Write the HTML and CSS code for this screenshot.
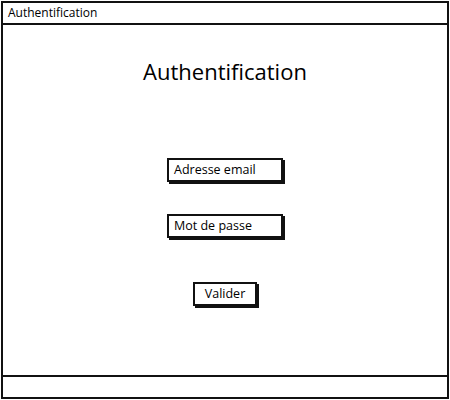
FILE: index.html
```html
<!DOCTYPE html>
<html lang="fr">
<head>
  <meta charset="UTF-8">
  <title>Authentification</title>
  <link rel="stylesheet" href="styles.css">
</head>
<body>
  <div class="window">
    <div class="titlebar">Authentification</div>
    <main class="content">
      <h1 class="heading">Authentification</h1>
      <form class="login-form">
        <div class="field">Adresse email</div>
        <div class="field">Mot de passe</div>
        <div class="button">Valider</div>
      </form>
    </main>
    <div class="statusbar"></div>
  </div>
</body>
</html>
```

FILE: styles.css
```css
body {
  margin: 0;
  padding: 0;
  background: #fff;
  font-family: 'Open Sans', 'Liberation Sans', sans-serif;
  color: #000;
}

.window {
  margin: 1px;
  width: 444px;
  height: 394px;
  border: 2px solid #111;
  display: flex;
  flex-direction: column;
}

.titlebar {
  height: 20px;
  line-height: 20px;
  border-bottom: 2px solid #111;
  padding-left: 5px;
  font-size: 12px;
}

.content {
  flex: 1;
  display: flex;
  flex-direction: column;
  align-items: center;
}

.heading {
  margin: 33px 0 0;
  font-size: 22px;
  font-weight: 400;
  line-height: 27px;
}

.login-form {
  margin-top: 73px;
  display: flex;
  flex-direction: column;
  align-items: center;
}

.field {
  box-sizing: border-box;
  width: 116px;
  height: 24px;
  border: 2px solid #111;
  box-shadow: 2px 2px 0 #111;
  padding-left: 5px;
  font-size: 12.5px;
  line-height: 20px;
  margin-bottom: 32px;
}

.button {
  box-sizing: border-box;
  width: 64px;
  height: 24px;
  margin-top: 12px;
  border: 2px solid #111;
  box-shadow: 2px 2px 0 #111;
  text-align: center;
  font-size: 12.5px;
  line-height: 20px;
}

.statusbar {
  height: 20px;
  border-top: 2px solid #111;
}
```
